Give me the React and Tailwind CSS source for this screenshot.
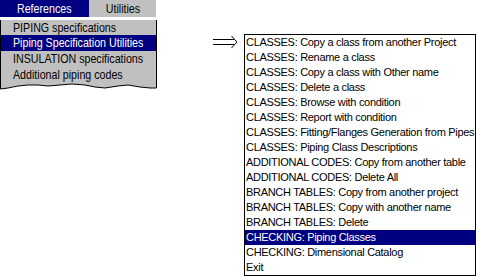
import React from 'react';

const leftItems = [
  'PIPING specifications',
  'Piping Specification Utilities',
  'INSULATION specifications',
  'Additional piping codes',
];

const rightItems = [
  'CLASSES: Copy a class from another Project',
  'CLASSES: Rename a class',
  'CLASSES: Copy a class with Other name',
  'CLASSES: Delete a class',
  'CLASSES: Browse with condition',
  'CLASSES: Report with condition',
  'CLASSES: Fitting/Flanges Generation from Pipes',
  'CLASSES: Piping Class Descriptions',
  'ADDITIONAL CODES: Copy from another table',
  'ADDITIONAL CODES: Delete All',
  'BRANCH TABLES: Copy from another project',
  'BRANCH TABLES: Copy with another name',
  'BRANCH TABLES: Delete',
  'CHECKING: Piping Classes',
  'CHECKING: Dimensional Catalog',
  'Exit',
];

export default function App() {
  return (
    <div className="w-[477px] h-[277px] bg-white flex overflow-hidden">
      {/* Left: tab bar + menu */}
      <div className="w-[157px] flex flex-col font-['Liberation_Sans',sans-serif] text-[13px] whitespace-nowrap">
        <div className="h-[17px] flex leading-[17px]">
          <div className="w-[89px] bg-[#000080] text-white flex justify-center">
            <span className="inline-block scale-x-[0.82]">References</span>
          </div>
          <div className="w-[67px] bg-[#c0c0c0] text-black flex justify-center">
            <span className="inline-block scale-x-[0.82]">Utilities</span>
          </div>
        </div>
        <div className="mt-[3px] bg-[#c0c0c0] border-x border-black">
          {leftItems.map((t, i) => (
            <div
              key={t}
              className={`${i === 0 ? 'h-[15px] leading-[15px]' : 'h-[16px] leading-[16px]'} pl-[12px] ${
                i === 1 ? 'bg-[#000080] text-white' : 'text-black'
              }`}
            >
              <span className="inline-block scale-x-[0.82] origin-left">{t}</span>
            </div>
          ))}
        </div>
        <svg width="157" height="8" viewBox="0 0 157 8" className="block">
          <path
            d="M0 0 H157 V5 L150 5 L140 4 L128 2 L118 3 L105 5 L95 4 L85 2 L72 1 L60 2 L48 3 L38 2 L28 2 L18 3 L8 5 L0 6 Z"
            fill="#c0c0c0"
          />
          <path
            d="M0.5 0 V6 L8 5 L18 3 L28 2 L38 2 L48 3 L60 2 L72 1 L85 2 L95 4 L105 5 L118 3 L128 2 L140 4 L150 5 L156.5 5 V0"
            fill="none"
            stroke="#000"
            strokeWidth="1"
          />
        </svg>
      </div>

      {/* Arrow */}
      <svg width="26" height="14" viewBox="0 0 26 14" className="ml-[56px] mt-[35px] shrink-0">
        <path d="M0 4.5 H21 M0 9.5 H21" stroke="#000" strokeWidth="1" />
        <path d="M18.5 1 L24 7 L18.5 13" fill="none" stroke="#000" strokeWidth="1" />
      </svg>

      {/* Right: list box */}
      <div className="ml-[5px] mt-[34px] w-[232px] h-[242px] border border-black shrink-0 font-['Liberation_Sans',sans-serif] text-[11px] tracking-[-0.3px]">
        {rightItems.map((t, i) => (
          <div
            key={t}
            className={`h-[15px] leading-[15px] pl-[1px] whitespace-nowrap ${
              i === 13 ? 'bg-[#000080] text-white' : 'text-black'
            }`}
          >
            {t}
          </div>
        ))}
      </div>
    </div>
  );
}
